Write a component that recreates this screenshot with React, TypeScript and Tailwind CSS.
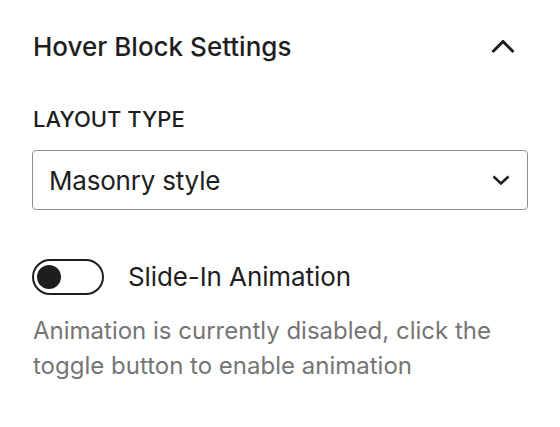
import React from 'react';

export default function App() {
  return (
    <div className="w-[560px] h-[427px] bg-white text-[#1e1e1e] font-['Inter',sans-serif] px-8">
      {/* Panel header */}
      <div className="h-[94px] flex items-center justify-between">
        <span className="text-[26px] font-medium leading-none pl-px">Hover Block Settings</span>
        <svg width="24" height="14" viewBox="0 0 24 14" className="mr-[13px]" fill="none">
          <polyline points="1.5,12 12,1.5 22.5,12" stroke="#1e1e1e" strokeWidth="3" />
        </svg>
      </div>

      {/* Layout type */}
      <div className="mt-3 text-[22px] font-medium leading-[26px] uppercase pl-px">Layout Type</div>
      <div className="mt-[18px] h-[60px] border border-[#8f8f8f] rounded-[4px] flex items-center justify-between pl-4 pr-[17px]">
        <span className="text-[26px] tracking-[-0.2px]">Masonry style</span>
        <svg width="18" height="10" viewBox="0 0 18 10" fill="none">
          <polyline points="1.5,1.5 9,8.5 16.5,1.5" stroke="#1e1e1e" strokeWidth="2.5" />
        </svg>
      </div>

      {/* Toggle */}
      <div className="mt-[47px] flex items-center gap-6">
        <div className="w-[72px] h-[36px] rounded-full border-2 border-[#1e1e1e] flex items-center pl-[3px]">
          <div className="w-6 h-6 rounded-full bg-[#1e1e1e]" />
        </div>
        <span className="text-[26px] tracking-[-0.1px]">Slide-In Animation</span>
      </div>
      <p className="mt-[17px] text-[24px] leading-[35px] text-[#757575] pl-px w-[470px]">
        Animation is currently disabled, click the toggle button to enable animation
      </p>
    </div>
  );
}
